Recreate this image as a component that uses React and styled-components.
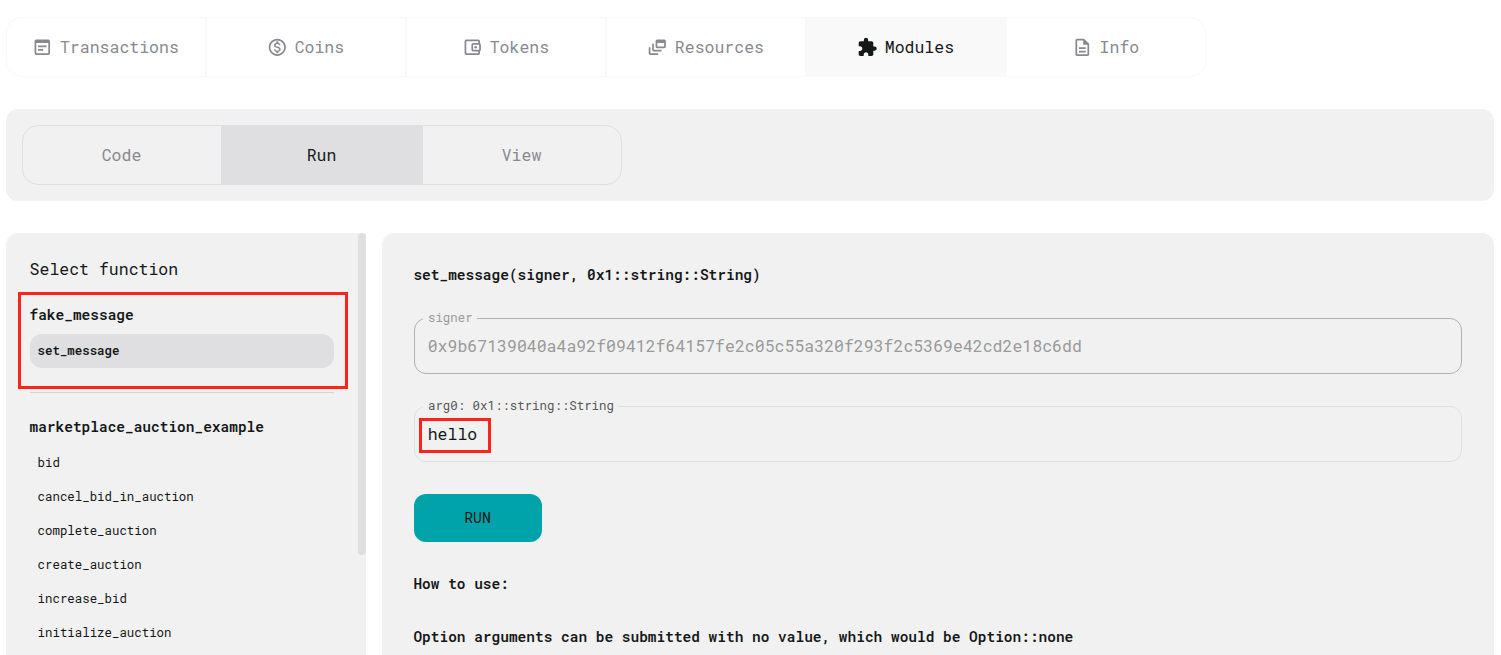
import React from "react";
import styled, { createGlobalStyle, css } from "styled-components";
import {
  MdOutlineWysiwyg,
  MdOutlineMonetizationOn,
  MdOutlineAccountBalanceWallet,
  MdOutlineDynamicFeed,
  MdExtension,
  MdOutlineDescription,
} from "react-icons/md";

const Global = createGlobalStyle`
  *, *::before, *::after { box-sizing: border-box; }
  html, body { margin: 0; height: 655px; overflow: hidden; background: #fff; }
  body, button, input { font-family: "Roboto Mono", "DejaVu Sans Mono", "Liberation Mono", monospace; color: #151819; }
`;

const Page = styled.main`
  height: 655px;
  overflow: hidden;
  padding: 17px 7px 0 6px;
  display: flex;
  flex-direction: column;
  gap: 32px;
`;

const TabRow = styled.nav`
  display: flex;
  flex: none;
`;

const Tab = styled.button`
  width: 200px;
  height: 60px;
  padding: 0 1px 2px 0;
  display: flex;
  align-items: center;
  justify-content: center;
  gap: 7.2px;
  font-size: 16.5px;
  color: ${(p) => (p.$active ? "#151819" : "#88888f")};
  border: 1px solid ${(p) => p.$line};
  background: ${(p) => (p.$active ? p.$line : "transparent")};
  &:first-child { border-radius: 16px 0 0 16px; }
  &:last-child { border-radius: 0 16px 16px 0; }
  svg { width: 20.6px; height: 20.6px; flex: none; margin-top: 1.6px; }
`;

const panel = css`
  background: #f1f1f1;
  border-radius: 12px;
`;

const SubTabs = styled.section`
  ${panel}
  flex: none;
  padding: 16px;
`;

const Columns = styled.div`
  display: flex;
  gap: 16px;
  flex: 1;
  min-height: 0;
`;

const Sidebar = styled.aside`
  ${panel}
  position: relative;
  width: 360px;
  border-radius: 12px 4px 0 0;
  padding: 24px 32px 0 24px;
`;

const ScrollThumb = styled.div`
  position: absolute;
  top: 0;
  right: 0;
  width: 8px;
  height: 322px;
  border-radius: 4px;
  background: #dfdfe1;
`;

const SideHeading = styled.h2`
  margin: 0 0 22px;
  font-size: 16.5px;
  font-weight: 400;
  line-height: 24px;
  text-indent: -0.4px;
`;

const GroupTitle = styled.h3`
  margin: 0 0 7px;
  font-size: 14.47px;
  font-weight: 600;
  line-height: 24px;
  text-indent: -0.5px;
`;

const FunctionItem = styled.div`
  height: 34px;
  padding: 0 7.6px;
  border-radius: 12px;
  font-size: 12.4px;
  line-height: 33px;
  font-weight: ${(p) => (p.$active ? 600 : 400)};
  background: ${(p) => (p.$active ? "#dfdfe1" : "transparent")};
`;

const Divider = styled.hr`
  margin: 24px 0 22px;
  border: 0;
  height: 1px;
  background: #d4d4d6;
`;

const Content = styled.section`
  ${panel}
  flex: 1;
  border-radius: 12px 12px 0 0;
  padding: 30px 32px 0;
`;

const Strong = styled.p`
  margin: 0 0 ${(p) => p.$after || 0}px;
  font-size: 14.47px;
  font-weight: 600;
  line-height: 24px;
  text-indent: -0.6px;
`;

const Field = styled.div`
  position: relative;
  height: 56px;
  margin-bottom: 32px;
  padding: 0 12.7px;
  border: 1px solid ${(p) => (p.$disabled ? "#b0b0b0" : "#dedfe0")};
  border-radius: 12px;
  font-size: 16.52px;
  line-height: 54px;
  color: ${(p) => (p.$disabled ? "#999a9a" : "#151819")};
`;

const FieldLabel = styled.label`
  position: absolute;
  top: -10px;
  left: 8px;
  padding: 0 4.6px 0 5px;
  background: #f1f1f1;
  font-size: 12.4px;
  line-height: 16px;
  color: ${(p) => (p.$disabled ? "#999a9a" : "#55585a")};
`;

const RunButton = styled.button`
  display: block;
  width: 128px;
  height: 48px;
  margin-bottom: 30px;
  padding: 0 1px 2px 0;
  border: 0;
  border-radius: 12px;
  background: #00a3a9;
  font-size: 14.8px;
`;

const Highlight = styled.div`
  position: absolute;
  pointer-events: none;
  border: 3px solid #ff241b;
`;

const GroupHighlight = styled(Highlight)`
  top: 59px;
  left: 12px;
  width: 330px;
  height: 97px;
`;

const ValueHighlight = styled(Highlight)`
  top: 11px;
  left: 4px;
  width: 72px;
  height: 35px;
`;

const tabs = [
  ["Transactions", MdOutlineWysiwyg],
  ["Coins", MdOutlineMonetizationOn],
  ["Tokens", MdOutlineAccountBalanceWallet],
  ["Resources", MdOutlineDynamicFeed],
  ["Modules", MdExtension],
  ["Info", MdOutlineDescription],
];

const auctionFunctions = [
  "bid",
  "cancel_bid_in_auction",
  "complete_auction",
  "create_auction",
  "increase_bid",
  "initialize_auction",
];

export default function App() {
  return (
    <>
      <Global />
      <Page>
        <TabRow>
          {tabs.map(([name, Icon]) => (
            <Tab key={name} $line="#f9f9f9" $active={name === "Modules"}>
              <Icon />
              {name}
            </Tab>
          ))}
        </TabRow>
        <SubTabs>
          <TabRow>
            {["Code", "Run", "View"].map((name) => (
              <Tab key={name} $line="#dfdfe1" $active={name === "Run"}>
                {name}
              </Tab>
            ))}
          </TabRow>
        </SubTabs>
        <Columns>
          <Sidebar>
            <SideHeading>Select function</SideHeading>
            <GroupTitle>fake_message</GroupTitle>
            <FunctionItem $active>set_message</FunctionItem>
            <Divider />
            <GroupTitle>marketplace_auction_example</GroupTitle>
            {auctionFunctions.map((name) => (
              <FunctionItem key={name}>{name}</FunctionItem>
            ))}
            <ScrollThumb />
            <GroupHighlight />
          </Sidebar>
          <Content>
            <Strong $after={31}>set_message(signer, 0x1::string::String)</Strong>
            <Field $disabled>
              <FieldLabel $disabled>signer</FieldLabel>
              0x9b67139040a4a92f09412f64157fe2c05c55a320f293f2c5369e42cd2e18c6dd
            </Field>
            <Field>
              <FieldLabel>arg0: 0x1::string::String</FieldLabel>
              hello
              <ValueHighlight />
            </Field>
            <RunButton>RUN</RunButton>
            <Strong $after={29}>How to use:</Strong>
            <Strong>Option arguments can be submitted with no value, which would be Option::none</Strong>
          </Content>
        </Columns>
      </Page>
    </>
  );
}
